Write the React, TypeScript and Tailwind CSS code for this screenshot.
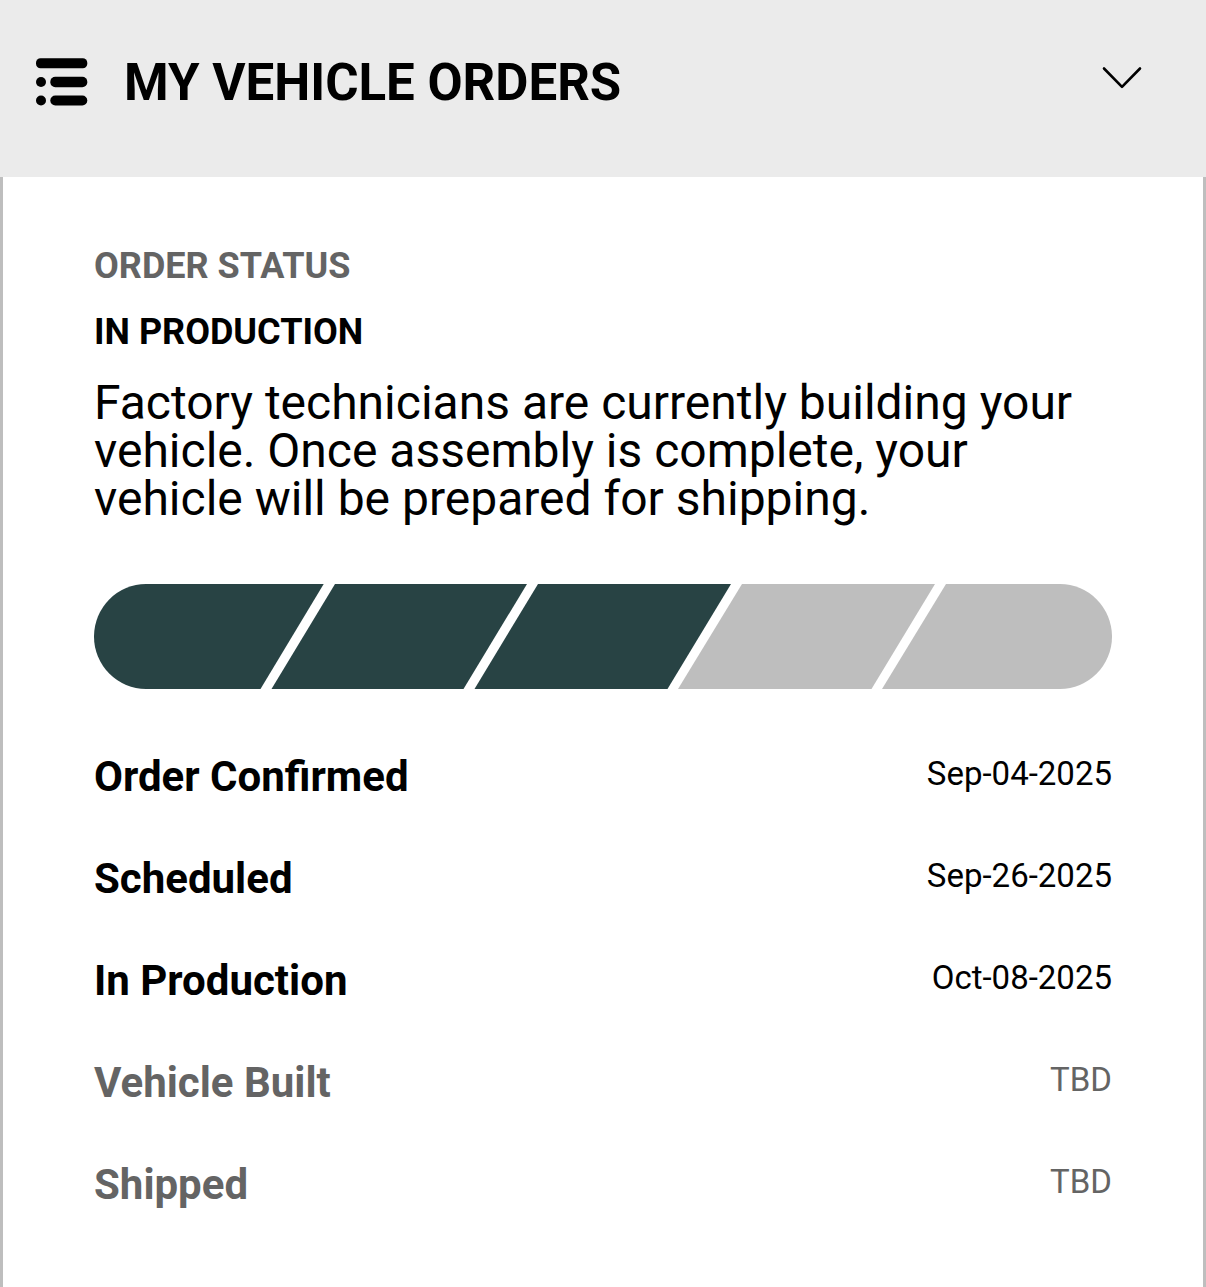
import { useState } from 'react';

interface OrderStep {
  label: string;
  date: string;
  done: boolean;
}

const steps: OrderStep[] = [
  { label: 'Order Confirmed', date: 'Sep-04-2025', done: true },
  { label: 'Scheduled', date: 'Sep-26-2025', done: true },
  { label: 'In Production', date: 'Oct-08-2025', done: true },
  { label: 'Vehicle Built', date: 'TBD', done: false },
  { label: 'Shipped', date: 'TBD', done: false },
];

function ListIcon() {
  return (
    <svg viewBox="0 0 52 50" className="w-[52px] h-[50px] shrink-0" aria-hidden="true">
      <rect x="0" y="0.3" width="51.300" height="10" rx="4.500" />
      <circle cx="5" cy="24" r="5" />
      <rect x="14.300" y="18.800" width="37" height="10.400" rx="5" />
      <circle cx="5" cy="42.500" r="5" />
      <rect x="14.300" y="37.500" width="37" height="10" rx="5" />
    </svg>
  );
}

function ProgressBar() {
  return (
    <svg viewBox="0 0 1018 105" className="block w-full" role="img" aria-label="Order progress">
      <g fill="#284344">
        <path d="M52 0H229.700L166.500 105H52A52 52.500 0 0 1 52 0Z" />
        <path d="M241 0H433L369.500 105H177.500Z" />
        <path d="M444 0H637L573.500 105H380.500Z" />
      </g>
      <g fill="#bebebe">
        <path d="M648 0H841L777.500 105H584Z" />
        <path d="M852 0H966A52 52.500 0 0 1 966 105H788Z" />
      </g>
    </svg>
  );
}

export default function App() {
  const [open, setOpen] = useState(true);

  return (
    <div className="flex flex-col min-h-screen bg-white text-black font-[Roboto,sans-serif]">
      <header className="bg-[#ebebeb]">
        <button
          type="button"
          className="flex items-center w-full h-[177px] pl-9 pr-16 pb-[11px] text-left"
          aria-expanded={open}
          onClick={() => setOpen(!open)}
        >
          <ListIcon />
          <span className="ml-9 grow text-[51px] leading-[60px] font-bold">MY VEHICLE ORDERS</span>
          <svg
            viewBox="0 0 40 24"
            className="w-10 h-6 mb-[10px]"
            fill="none"
            stroke="currentColor"
            strokeWidth="2.600"
            strokeLinecap="round"
            strokeLinejoin="round"
            aria-hidden="true"
          >
            <path d="M2 2.500L20 20.800L38 2.500" />
          </svg>
        </button>
      </header>

      {open && (
        <main className="grow border-x-3 border-[#bebebe] px-[91px] pt-[68px]">
          <h2 className="text-[36px] leading-[42px] font-bold text-[#646464]">ORDER STATUS</h2>
          <h3 className="mt-6 text-[36px] leading-[42px] font-bold">IN PRODUCTION</h3>
          <p className="mt-[26px] text-[48px] leading-[48px]">
            Factory technicians are currently building your vehicle. Once assembly is complete, your vehicle will be prepared for shipping.
          </p>
          <div className="mt-[61px]">
            <ProgressBar />
          </div>
          <ul className="mt-16">
            {steps.map((step) => (
              <li
                key={step.label}
                className={`flex justify-between h-[102px] ${step.done ? '' : 'text-[#646464]'}`}
              >
                <span className="text-[42px] leading-12 font-bold">{step.label}</span>
                <span className="text-[33px] leading-[42px]">{step.date}</span>
              </li>
            ))}
          </ul>
        </main>
      )}
    </div>
  );
}
